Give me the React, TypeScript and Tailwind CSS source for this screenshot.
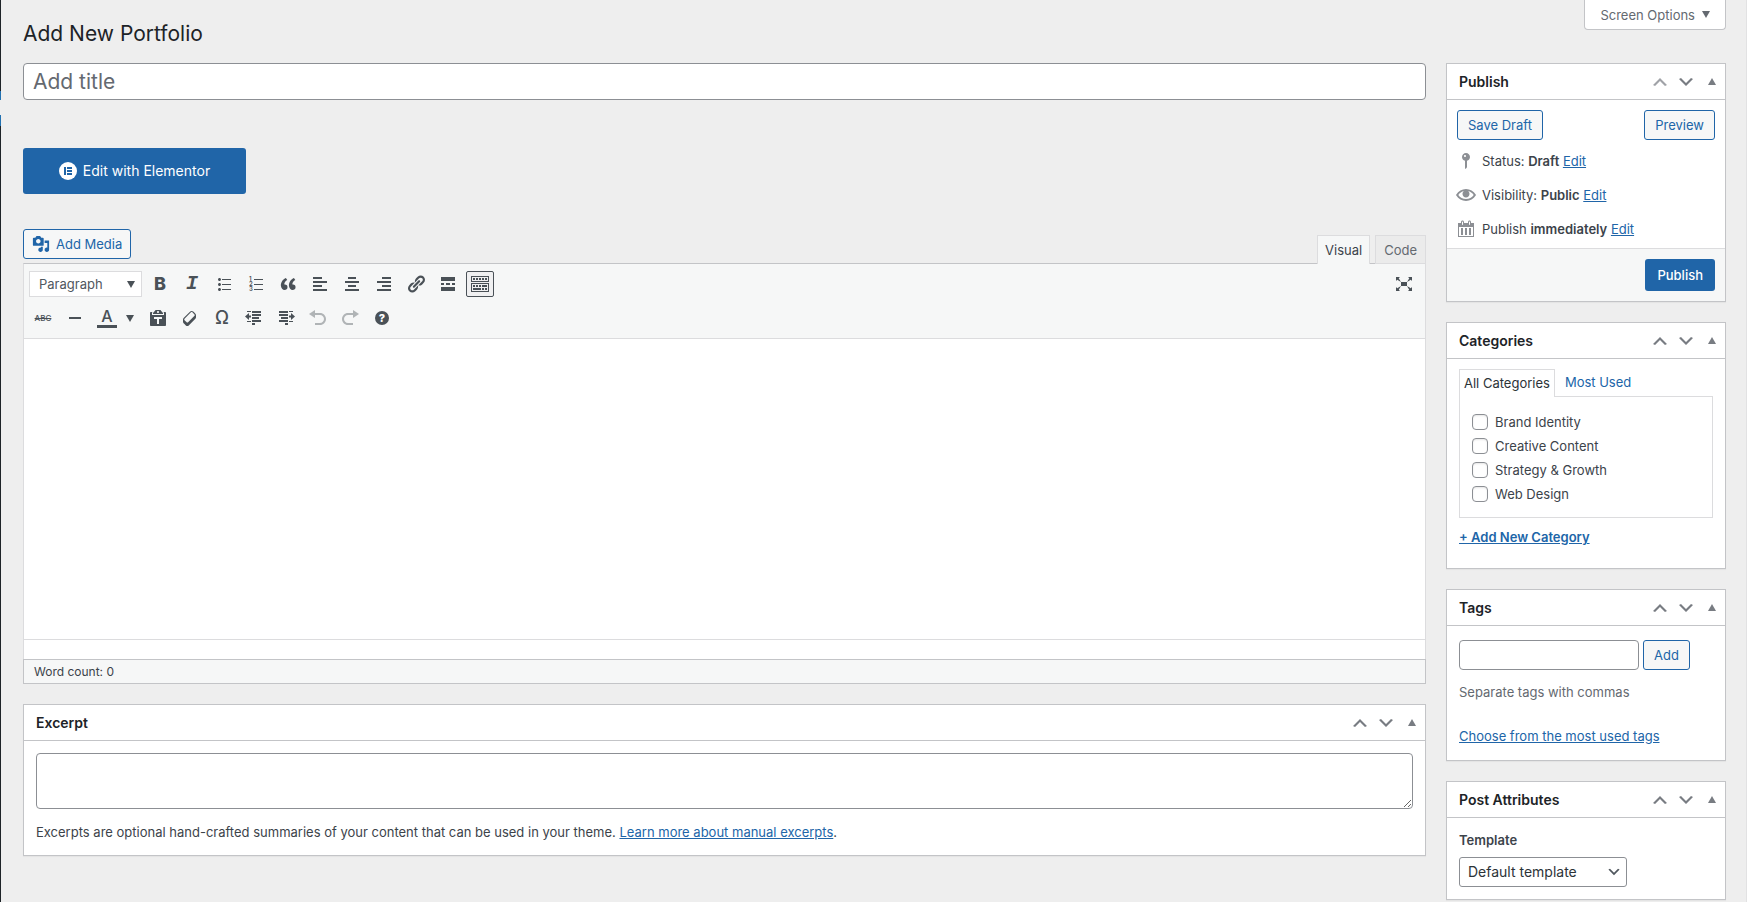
import React, { useState } from 'react';
import { clsx } from 'clsx';

const toolbarIcons = {
  quote:
    'M9.49 13.22c0-.74-.2-1.38-.61-1.9-.62-.78-1.83-.88-2.53-.72-.29-1.65 1.11-3.75 2.92-4.65L7.88 4c-2.73 1.3-5.42 4.28-4.96 8.05C3.21 14.43 4.59 16 6.54 16c.85 0 1.56-.25 2.12-.75s.83-1.18.83-2.03zm8.05 0c0-.74-.2-1.38-.61-1.9-.63-.78-1.83-.88-2.53-.72-.29-1.65 1.11-3.75 2.92-4.65L15.93 4c-2.73 1.3-5.41 4.28-4.95 8.05.29 2.38 1.66 3.95 3.61 3.95.85 0 1.56-.25 2.12-.75s.83-1.18.83-2.03z',
  bullets:
    'M5.5 7C4.67 7 4 6.33 4 5.5 4 4.68 4.67 4 5.5 4 6.32 4 7 4.68 7 5.5 7 6.33 6.32 7 5.5 7zM8 5h9v1H8V5zm-2.5 7c-.83 0-1.5-.67-1.5-1.5C4 9.68 4.67 9 5.5 9c.82 0 1.5.68 1.5 1.5 0 .83-.68 1.5-1.5 1.5zM8 10h9v1H8v-1zm-2.5 7c-.83 0-1.5-.67-1.5-1.5 0-.82.67-1.5 1.5-1.5.82 0 1.5.68 1.5 1.5 0 .83-.68 1.5-1.5 1.5zM8 15h9v1H8v-1z',
  alignLeft: 'M12 5V3H3v2h9zm5 4V7H3v2h14zm-5 4v-2H3v2h9zm5 4v-2H3v2h14z',
  alignCenter: 'M14 5V3H6v2h8zm3 4V7H3v2h14zm-3 4v-2H6v2h8zm3 4v-2H3v2h14z',
  alignRight: 'M17 5V3H8v2h9zm0 4V7H3v2h14zm0 4v-2H8v2h9zm0 4v-2H3v2h14z',
  link: 'M17.74 2.76c1.68 1.69 1.68 4.41 0 6.1l-1.53 1.52c-1.12 1.12-2.7 1.47-4.14 1.09l2.62-2.61.76-.77.76-.76c.84-.84.84-2.2 0-3.04-.84-.85-2.2-.85-3.04 0l-.77.76-3.38 3.38c-.37-1.44-.02-3.02 1.1-4.14l1.52-1.53c1.69-1.68 4.42-1.68 6.1 0zM8.59 13.43l5.34-5.34c.42-.42.42-1.1 0-1.52-.44-.43-1.13-.39-1.53 0l-5.33 5.34c-.42.42-.42 1.1 0 1.52.44.43 1.13.39 1.52 0zm-.76 2.29l4.14-4.15c.38 1.44.03 3.02-1.09 4.14l-1.52 1.53c-1.69 1.68-4.41 1.68-6.1 0-1.68-1.68-1.68-4.42 0-6.1l1.53-1.52c1.12-1.12 2.7-1.47 4.14-1.1l-4.14 4.15c-.85.84-.85 2.2 0 3.05.84.84 2.2.84 3.04 0z',
  more: 'M17 7V3H3v4h14zM6 11V9H3v2h3zm6 0V9H8v2h4zm5 0V9h-3v2h3zm0 6v-4H3v4h14z',
  kitchenSink:
    'M19 2v6H1V2h18zm-1 5V3H2v4h16zM5 4v2H3V4h2zm3 0v2H6V4h2zm3 0v2H9V4h2zm3 0v2h-2V4h2zm3 0v2h-2V4h2zm2 5v9H1V9h18zm-1 8v-7H2v7h16zM5 11v2H3v-2h2zm3 0v2H6v-2h2zm3 0v2H9v-2h2zm6 0v2h-5v-2h5zm-6 3v2H3v-2h8zm3 0v2h-2v-2h2zm3 0v2h-2v-2h2z',
  expand:
    'M7 8h6v4H7zm-5 5v4h4l-1.2-1.2L7 12l-3.8 2.2M14 17h4v-4l-1.2 1.2L13 12l2.2 3.8M14 3l1.3 1.3L13 8l3.8-2.2L18 7V3M6 3H2v4l1.2-1.2L7 8 4.7 4.3',
  rule: 'M4 9h12v2H4z',
  eraser:
    'M14.29 4.59l1.1 1.11c.41.4.61.94.61 1.47v2.12c0 .53-.2 1.07-.61 1.47l-6.63 6.63c-.4.41-.94.61-1.47.61s-1.07-.2-1.47-.61l-1.11-1.1-1.1-1.11c-.41-.4-.61-.94-.61-1.47v-2.12c0-.54.2-1.07.61-1.48l6.63-6.62c.4-.41.94-.61 1.47-.61s1.06.2 1.47.61zm-6.21 9.7l6.42-6.42c.39-.39.39-1.03 0-1.43L12.36 4.3c-.19-.19-.45-.29-.72-.29s-.52.1-.71.29l-6.42 6.42c-.39.4-.39 1.04 0 1.43l2.14 2.14c.38.38 1.04.38 1.43 0z',
  outdent: 'M8 3h9v2H8zM3 3h4v1H3zM8 6h9v2H8zM8 9h7v2H8zM8 12h9v2H8zM3 13h4v1H3zM8 15h3v2H8zM5 5v2.5h2v2H5V12L1 8.5z',
  indent: 'M3 3h9v2H3zM13 3h4v1h-4zM3 6h9v2H3zM5 9h7v2H5zM3 12h9v2H3zM13 13h4v1h-4zM9 15h3v2H9zM15 5v2.5h-2v2h2V12l4-3.5z',
  undo: 'M12 5H7V2L1 6l6 4V7h5c2.2 0 4 1.8 4 4s-1.8 4-4 4H7v2h5c3.3 0 6-2.7 6-6s-2.7-6-6-6z',
  redo: 'M8 5h5V2l6 4-6 4V7H8c-2.2 0-4 1.8-4 4s1.8 4 4 4h5v2H8c-3.3 0-6-2.7-6-6s2.7-6 6-6z',
};

const panelIcons = {
  media:
    'M13 11V4c0-.55-.45-1-1-1h-1.67L9 1H5L3.67 3H2c-.55 0-1 .45-1 1v7c0 .55.45 1 1 1h10c.55 0 1-.45 1-1zM7 4.5c1.38 0 2.5 1.12 2.5 2.5S8.38 9.5 7 9.5 4.5 8.38 4.5 7 5.62 4.5 7 4.5zM14 6h5v10.5c0 1.38-1.12 2.5-2.5 2.5S14 17.88 14 16.5s1.12-2.5 2.5-2.5c.17 0 .34.02.5.05V9h-3V6zm-4 8.05V13h2v3.5c0 1.38-1.12 2.5-2.5 2.5S7 17.88 7 16.5 8.12 14 9.5 14c.17 0 .34.02.5.05z',
  pin: 'M14 6c0 1.86-1.28 3.41-3 3.86V16c0 1-2 2-2 2V9.86c-1.72-.45-3-2-3-3.86 0-2.21 1.79-4 4-4s4 1.79 4 4zM8 5c0 .55.45 1 1 1s1-.45 1-1-.45-1-1-1-1 .45-1 1z',
  eye: 'M19.7 9.4C17.7 6 14 3.9 10 3.9S2.3 6 .3 9.4L0 10l.3.6c2 3.4 5.7 5.5 9.7 5.5s7.7-2.1 9.7-5.5l.3-.6-.3-.6zM10 14.1c-3.1 0-6-1.6-7.7-4.1C3.6 8 5.7 6.6 8 6.1c-.9.6-1.5 1.7-1.5 2.9 0 1.9 1.6 3.5 3.5 3.5s3.5-1.6 3.5-3.5c0-1.2-.6-2.3-1.5-2.9 2.3.5 4.4 1.9 5.7 3.9-1.7 2.5-4.6 4.1-7.7 4.1z',
  calendar:
    'M15 4h3v14H2V4h3V3c0-.83.67-1.5 1.5-1.5S8 2.17 8 3v1h4V3c0-.83.67-1.5 1.5-1.5S15 2.17 15 3v1zM6 3v2.5c0 .28.22.5.5.5s.5-.22.5-.5V3c0-.28-.22-.5-.5-.5S6 2.72 6 3zm7 0v2.5c0 .28.22.5.5.5s.5-.22.5-.5V3c0-.28-.22-.5-.5-.5s-.5.22-.5.5zm4 14V8H3v9h14zM7 16V9H5v7h2zm4 0V9H9v7h2zm4 0V9h-2v7h2z',
  up: 'M15 14l-5-5-5 5-2-1 7-7 7 7z',
  down: 'M5 6l5 5 5-5 2 1-7 7-7-7z',
};

function Icon({ d, className = 'size-5' }: { d: string; className?: string }) {
  return (
    <svg viewBox="0 0 20 20" fill="currentColor" className={clsx('shrink-0', className)} aria-hidden="true">
      <path d={d} />
    </svg>
  );
}

function Caret({ up = false, className }: { up?: boolean; className?: string }) {
  return (
    <svg viewBox="0 0 8 7" fill="currentColor" className={clsx('h-[7px] w-2 shrink-0', className)} aria-hidden="true">
      <path d={up ? 'M4 0l4 7H0z' : 'M0 0h8L4 7z'} />
    </svg>
  );
}

type ToolButtonProps = {
  label: string;
  active?: boolean;
  disabled?: boolean;
  children: React.ReactNode;
};

function ToolButton({ label, active, disabled, children }: ToolButtonProps) {
  return (
    <button
      type="button"
      aria-label={label}
      title={label}
      disabled={disabled}
      className={clsx(
        'flex h-[26px] w-7 items-center justify-center rounded-xs border',
        active ? 'border-[#4a5157] bg-[#f0f0f1]' : 'border-transparent',
        disabled && 'opacity-40',
      )}
    >
      {children}
    </button>
  );
}

function OutlineButton({ children, className }: { children: React.ReactNode; className?: string }) {
  return (
    <button
      type="button"
      className={clsx(
        'flex h-[30px] items-center rounded-[3px] border border-[#2065a8] bg-[#f6f7f7] text-[#2065a8]',
        className ?? 'px-2.5',
      )}
    >
      {children}
    </button>
  );
}

function TextLink({ children, className }: { children: React.ReactNode; className?: string }) {
  return (
    <a href="#" className={clsx('text-[#2065a8] underline', className)}>
      {children}
    </a>
  );
}

type PostboxProps = {
  title: string;
  first?: boolean;
  children: React.ReactNode;
};

function Postbox({ title, first, children }: PostboxProps) {
  return (
    <section className="border border-[#c3c4c7] bg-white shadow-[0_1px_1px_rgba(0,0,0,0.04)]">
      <header className="flex h-9 items-center justify-between border-b border-[#c3c4c7] pl-3">
        <h2 className="text-sm font-semibold text-[#1d2327]">{title}</h2>
        <div className="flex items-center text-[#787c82]">
          <button type="button" aria-label={`Move ${title} up`} className={clsx('flex w-[26px] justify-center', first && 'opacity-70')}>
            <Icon d={panelIcons.up} />
          </button>
          <button type="button" aria-label={`Move ${title} down`} className="flex w-[26px] justify-center">
            <Icon d={panelIcons.down} />
          </button>
          <button type="button" aria-label={`Toggle ${title}`} className="flex w-[26px] justify-center">
            <Caret up />
          </button>
        </div>
      </header>
      {children}
    </section>
  );
}

function Toolbar() {
  return (
    <div className="flex flex-col gap-2 border-b border-[#dcdcde] bg-[#f6f7f7] px-[5px] py-[7px] text-[#4a5157]">
      <div className="flex items-center gap-1">
        <div className="relative">
          <select
            aria-label="Paragraph format"
            className="h-[26px] w-[113px] appearance-none border border-[#dcdcde] bg-white pl-[9px] text-[13px] text-[#50575e]"
          >
            <option>Paragraph</option>
          </select>
          <Caret className="pointer-events-none absolute top-[10px] right-[7px]" />
        </div>
        <ToolButton label="Bold">
          <span className="text-lg leading-none font-extrabold">B</span>
        </ToolButton>
        <ToolButton label="Italic">
          <span className="font-['Liberation_Mono',monospace] text-xl leading-none font-bold italic">I</span>
        </ToolButton>
        <ToolButton label="Bulleted list">
          <Icon d={toolbarIcons.bullets} />
        </ToolButton>
        <ToolButton label="Numbered list">
          <svg viewBox="0 0 20 20" fill="currentColor" className="size-5" aria-hidden="true">
            <text x="3" y="7" fontSize="6" fontWeight="600">1</text>
            <text x="3" y="12" fontSize="6" fontWeight="600">2</text>
            <text x="3" y="17" fontSize="6" fontWeight="600">3</text>
            <path d="M8 5h9v1H8zM8 10h9v1H8zM8 15h9v1H8z" />
          </svg>
        </ToolButton>
        <ToolButton label="Blockquote">
          <Icon d={toolbarIcons.quote} />
        </ToolButton>
        <ToolButton label="Align left">
          <Icon d={toolbarIcons.alignLeft} />
        </ToolButton>
        <ToolButton label="Align center">
          <Icon d={toolbarIcons.alignCenter} />
        </ToolButton>
        <ToolButton label="Align right">
          <Icon d={toolbarIcons.alignRight} />
        </ToolButton>
        <ToolButton label="Insert link">
          <Icon d={toolbarIcons.link} />
        </ToolButton>
        <ToolButton label="Insert Read More tag">
          <Icon d={toolbarIcons.more} />
        </ToolButton>
        <ToolButton label="Toolbar Toggle" active>
          <Icon d={toolbarIcons.kitchenSink} />
        </ToolButton>
        <div className="mr-0.5 ml-auto">
          <ToolButton label="Distraction-free writing mode">
            <Icon d={toolbarIcons.expand} />
          </ToolButton>
        </div>
      </div>

      <div className="flex items-center gap-1">
        <ToolButton label="Strikethrough">
          <span className="text-[8px] leading-none font-medium line-through">ABC</span>
        </ToolButton>
        <ToolButton label="Horizontal line">
          <Icon d={toolbarIcons.rule} />
        </ToolButton>
        <button type="button" aria-label="Text color" className="flex h-[26px] w-[47px] items-center gap-[9px] pl-1">
          <span className="flex h-5 w-5 flex-col items-center justify-end border-b-3 border-[#4a5157] pb-px text-base leading-4 font-medium">
            A
          </span>
          <Caret />
        </button>
        <ToolButton label="Paste as text">
          <svg viewBox="0 0 20 20" fill="currentColor" className="size-5" aria-hidden="true">
            <path
              fillRule="evenodd"
              d="M12.38 2L15 5v1H5V5l2.64-3h4.74zM10 5c.55 0 1-.44 1-1 0-.55-.45-1-1-1s-1 .45-1 1c0 .56.45 1 1 1z"
            />
            <path d="M15.45 4H17c.55 0 1 .45 1 1v12c0 .56-.45 1-1 1H3c-.55 0-1-.44-1-1V5c0-.55.45-1 1-1h1.55L4 4.63V7h12V4.63z" />
            <rect x="6" y="9" width="8" height="2" fill="#f6f7f7" />
            <rect x="9" y="9" width="2" height="7" fill="#f6f7f7" />
          </svg>
        </ToolButton>
        <ToolButton label="Clear formatting">
          <Icon d={toolbarIcons.eraser} />
        </ToolButton>
        <ToolButton label="Special character">
          <span className="text-lg leading-none font-medium">Ω</span>
        </ToolButton>
        <ToolButton label="Decrease indent">
          <Icon d={toolbarIcons.outdent} />
        </ToolButton>
        <ToolButton label="Increase indent">
          <Icon d={toolbarIcons.indent} />
        </ToolButton>
        <ToolButton label="Undo" disabled>
          <Icon d={toolbarIcons.undo} />
        </ToolButton>
        <ToolButton label="Redo" disabled>
          <Icon d={toolbarIcons.redo} />
        </ToolButton>
        <ToolButton label="Keyboard Shortcuts">
          <span className="flex size-3.5 items-center justify-center rounded-full bg-[#4a5157] text-[11px] leading-none font-extrabold text-white">
            ?
          </span>
        </ToolButton>
      </div>
    </div>
  );
}

function PublishBox() {
  const rows = [
    { icon: panelIcons.pin, label: 'Status:', value: 'Draft' },
    { icon: panelIcons.eye, label: 'Visibility:', value: 'Public' },
    { icon: panelIcons.calendar, label: 'Publish', value: 'immediately' },
  ];

  return (
    <Postbox title="Publish" first>
      <div className="flex justify-between px-2.5 pt-2.5">
        <OutlineButton>Save Draft</OutlineButton>
        <OutlineButton>Preview</OutlineButton>
      </div>
      <ul className="px-[9px] pt-1 pb-0.5">
        {rows.map((row) => (
          <li key={row.label} className="flex h-[34px] items-center gap-1.5">
            <Icon d={row.icon} className="size-5 text-[#8c8f94]" />
            <span>
              {row.label} <b className="font-semibold">{row.value}</b> <TextLink>Edit</TextLink>
            </span>
          </li>
        ))}
      </ul>
      <div className="flex justify-end border-t border-[#dcdcde] bg-[#f6f7f7] p-2.5">
        <button type="button" className="h-8 rounded-[3px] bg-[#2065a8] px-3 font-medium text-white">
          Publish
        </button>
      </div>
    </Postbox>
  );
}

function CategoriesBox() {
  const categories = ['Brand Identity', 'Creative Content', 'Strategy & Growth', 'Web Design'];
  const [checked, setChecked] = useState<string[]>([]);

  const toggle = (name: string) =>
    setChecked((prev) => (prev.includes(name) ? prev.filter((item) => item !== name) : [...prev, name]));

  return (
    <Postbox title="Categories">
      <div className="px-3 pt-2.5 pb-[21px]">
        <div className="flex">
          <button type="button" className="-mb-px h-7 border border-b-0 border-[#dcdcde] bg-white px-1 pb-0.5 text-[#2c3338]">
            All Categories
          </button>
          <button type="button" className="h-[27px] px-2.5 pb-px text-[#2065a8]">
            Most Used
          </button>
        </div>
        <div className="flex flex-col border border-[#dcdcde] px-3 pt-[13px] pb-[11px]">
          {categories.map((name) => (
            <label key={name} className="flex h-6 items-center gap-[7px]">
              <input
                type="checkbox"
                checked={checked.includes(name)}
                onChange={() => toggle(name)}
                className="size-4 appearance-none rounded-sm border border-[#8c8f94] bg-white shadow-[inset_0_1px_2px_rgba(0,0,0,0.1)] checked:bg-[#2065a8]"
              />
              {name}
            </label>
          ))}
        </div>
        <p className="pt-[9px] leading-5">
          <TextLink className="font-semibold">+ Add New Category</TextLink>
        </p>
      </div>
    </Postbox>
  );
}

function TagsBox() {
  return (
    <Postbox title="Tags">
      <div className="px-3 pt-3.5 pb-3.5">
        <div className="flex gap-1">
          <input
            type="text"
            aria-label="Add New Tag"
            className="h-[30px] w-[180px] rounded-sm border border-[#8c8f94] bg-white px-2"
          />
          <OutlineButton>Add</OutlineButton>
        </div>
        <p className="pt-3 leading-5 text-[#646970]">Separate tags with commas</p>
        <p className="pt-6 leading-5">
          <TextLink>Choose from the most used tags</TextLink>
        </p>
      </div>
    </Postbox>
  );
}

function AttributesBox() {
  return (
    <Postbox title="Post Attributes">
      <div className="px-3 pt-3 pb-3">
        <label htmlFor="template" className="block leading-5 font-semibold">
          Template
        </label>
        <div className="relative mt-[7px] w-[168px]">
          <select
            id="template"
            className="h-[30px] w-full appearance-none rounded-[3px] border border-[#8c8f94] bg-white pl-2 text-sm text-[#2c3338]"
          >
            <option>Default template</option>
          </select>
          <Icon
            d={panelIcons.down}
            className="pointer-events-none absolute top-[7px] right-[5px] size-4 text-[#50575e]"
          />
        </div>
      </div>
    </Postbox>
  );
}

export default function App() {
  return (
    <div className="flex min-h-screen bg-[#eeeeee] font-[Inter,'Liberation_Sans',sans-serif] text-[13px] leading-5 text-[#3c434a]">
      {/* Edge of the collapsed admin menu */}
      <div className="flex w-px shrink-0 flex-col">
        <div className="h-[91px] bg-[#1d2327]" />
        <div className="mb-[15px] h-[9px] bg-[#2271b1]" />
        <div className="h-[11px] bg-[#2271b1]" />
        <div className="flex-1 bg-[#1d2327]" />
      </div>

      <div className="min-w-0 flex-1 border-r border-[#e2e2e3] pr-5 pl-[22px]">
        <div className="flex items-start justify-between">
          <h1 className="pt-[18px] pb-[13px] text-[21px] leading-8 text-[#1d2327]">Add New Portfolio</h1>
          <button
            type="button"
            className="flex h-[30px] items-center gap-[7px] rounded-b-sm border border-t-0 border-[#c3c4c7] bg-white px-[15px] text-[#646970]"
          >
            Screen Options
            <Caret />
          </button>
        </div>

        <div className="flex items-start gap-5">
          <main className="min-w-0 flex-1">
            <input
              type="text"
              aria-label="Add title"
              placeholder="Add title"
              className="block h-[37px] w-full rounded-sm border border-[#8c8f94] bg-white px-[9px] text-[21px] placeholder:text-[#646970]"
            />

            <button
              type="button"
              className="mt-12 flex h-[46px] w-[223px] items-center justify-center gap-1.5 rounded-[3px] bg-[#2065a8] text-sm text-white"
            >
              <svg viewBox="0 0 18 18" className="size-[18px]" aria-hidden="true">
                <circle cx="9" cy="9" r="9" fill="#fff" />
                <path d="M5 5h2v8H5zM8 5h5v2H8zM8 8h5v2H8zM8 11h5v2H8z" fill="#2065a8" />
              </svg>
              Edit with Elementor
            </button>

            <div className="mt-[35px] flex items-start justify-between">
              <OutlineButton className="mb-1 gap-1.5 px-2">
                <Icon d={panelIcons.media} className="size-[18px]" />
                Add Media
              </OutlineButton>
              <div className="-mb-px flex gap-[5px] self-end">
                <button type="button" className="relative h-[29px] border border-b-0 border-[#dcdcde] bg-[#f6f7f7] px-[7px] text-[#3c434a]">
                  Visual
                </button>
                <button type="button" className="h-[29px] border border-[#dcdcde] bg-[#ebebeb] px-2 text-[#646970]">
                  Code
                </button>
              </div>
            </div>

            <div className="border border-t-[#c3c4c7] border-r-[#dcdcde] border-b-0 border-l-[#dcdcde] bg-white">
              <Toolbar />
              <div role="textbox" aria-label="Content" contentEditable className="h-[300px] outline-none" />
              <div className="h-5 border-t border-[#dcdcde]" />
            </div>
            <div className="h-[25px] border border-[#c3c4c7] bg-[#f6f7f7] px-2.5 text-xs leading-[23px]">Word count: 0</div>

            <div className="pt-5">
              <Postbox title="Excerpt">
                <div className="px-3 pt-3 pb-[13px]">
                  <textarea
                    aria-label="Excerpt"
                    className="block h-14 w-full rounded-sm border border-[#8c8f94] bg-white p-2"
                  />
                  <p className="pt-[13px]">
                    Excerpts are optional hand-crafted summaries of your content that can be used in your theme.{' '}
                    <TextLink>Learn more about manual excerpts</TextLink>.
                  </p>
                </div>
              </Postbox>
            </div>
          </main>

          <aside className="flex w-[280px] shrink-0 flex-col gap-5">
            <PublishBox />
            <CategoriesBox />
            <TagsBox />
            <AttributesBox />
          </aside>
        </div>
      </div>
    </div>
  );
}
